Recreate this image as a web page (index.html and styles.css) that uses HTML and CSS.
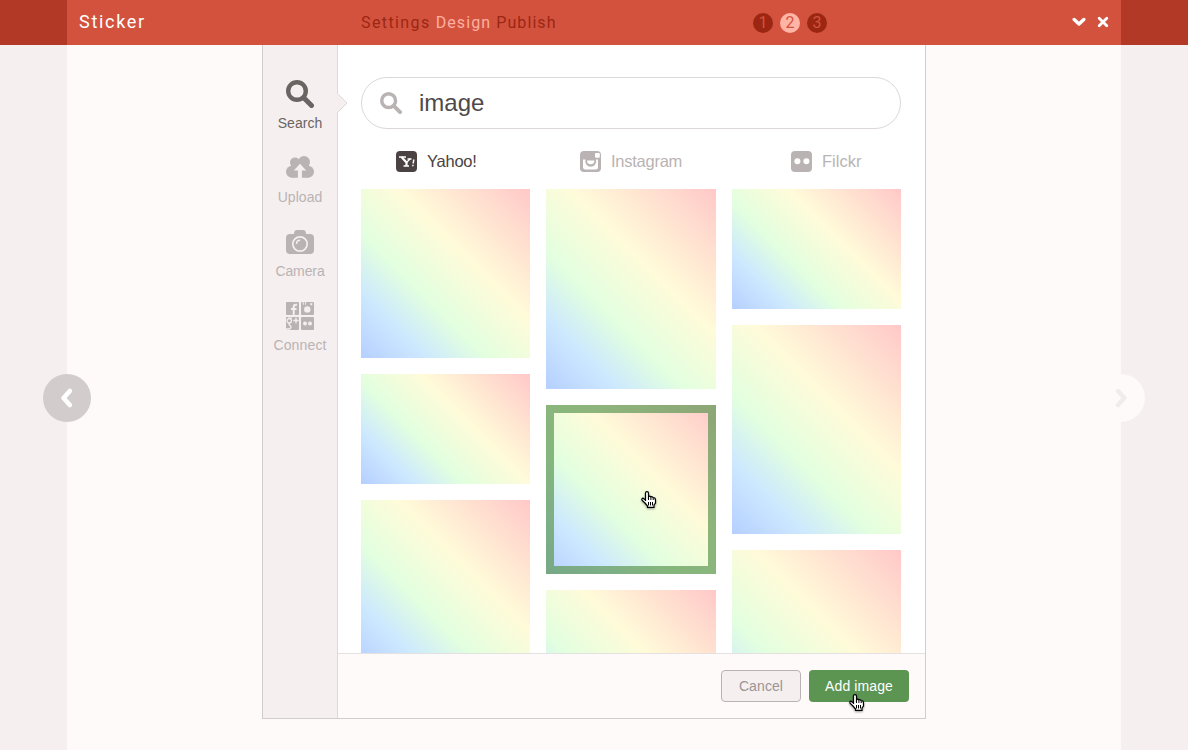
FILE: index.html
```html
<!DOCTYPE html>
<html lang="en">
<head>
<meta charset="utf-8">
<title>Sticker</title>
<link rel="stylesheet" href="styles.css">
</head>
<body>
<svg class="defs" width="0" height="0">
  <defs>
    <symbol id="lens" viewBox="0 0 28 28"><circle cx="11" cy="11" r="8.800" fill="none" stroke="currentColor" stroke-width="4.400"/><path d="M18.500 18.500l7 7" stroke="currentColor" stroke-width="5" stroke-linecap="round"/></symbol>
    <symbol id="hand" viewBox="0 0 16 18"><path d="M4.500 10V2.200Q4.500 .7 6 .7T7.500 2.200V6Q8.500 4.500 9.800 5.700 11 5.200 12 6.500 14.500 6.500 14.500 9v3l-1.500 2v2.300H6.500V15L4 12 1 9.200Q.5 7.500 2 7.200L4.500 9z" fill="#fff" stroke="#000" stroke-width="1.200"/><path d="M7.500 5v4M9.900 6v3M12.200 7v2M7.500 11v3.500M9.500 11v3.500M11.500 11v3.500" stroke="#000" stroke-width="1"/></symbol>
  </defs>
</svg>

<header class="topbar">
  <div class="topbar-inner">
    <h1 class="brand">Sticker</h1>
    <nav class="crumbs"><span class="first">Settings</span><span class="on">Design</span><span>Publish</span></nav>
    <ol class="steps"><li>1</li><li class="on">2</li><li>3</li></ol>
    <div class="window-actions">
      <svg width="14" height="10" viewBox="0 0 14 10"><path d="M2.200 2.500l4.800 4.500 4.800-4.500" fill="none" stroke="#fff" stroke-width="3.400" stroke-linecap="round" stroke-linejoin="round"/></svg>
      <svg width="12" height="12" viewBox="0 0 12 12"><path d="M2.200 2.200l7.600 7.600M9.800 2.200L2.200 9.800" stroke="#fff" stroke-width="2.800" stroke-linecap="round"/></svg>
    </div>
  </div>
</header>

<main class="stage">
  <div class="page">
    <section class="modal">
      <aside class="sources">
        <a class="source active"><svg width="28" height="28"><use href="#lens"/></svg><span class="s1">Search</span></a>
        <a class="source"><svg width="28" height="28" viewBox="0 0 28 28"><g fill="currentColor"><circle cx="9" cy="8.500" r="5"/><circle cx="18" cy="8" r="6"/><circle cx="6" cy="17.700" r="6"/><circle cx="22" cy="17.700" r="6"/><path d="M5 9h18v9l-1 5.700H6z"/></g><path d="M14 9.800l6.200 6.700h-4.300V24h-4v-7.500H7.800z" fill="#f5efef"/></svg><span class="s2">Upload</span></a>
        <a class="source"><svg width="28" height="28" viewBox="0 0 28 28"><path fill="currentColor" d="M4 6h4q0-4 3-4h6q3 0 3 4h4q4 0 4 4v12q0 4-4 4H4q-4 0-4-4V10q0-4 4-4z"/><circle cx="14" cy="16" r="7.200" fill="none" stroke="#f5efef" stroke-width="1.700"/><path d="M10.500 16q0-3.700 3.700-3.700" fill="none" stroke="#f5efef" stroke-width="1.400"/></svg><span class="s3">Camera</span></a>
        <a class="source"><svg width="28" height="28" viewBox="0 0 28 28"><g fill="currentColor"><rect width="13" height="13" rx="1"/><rect x="15" width="13" height="13" rx="1"/><rect y="15" width="13" height="13" rx="1"/><rect x="15" y="15" width="13" height="13" rx="1"/></g><g fill="none" stroke="#f5efef"><path d="M11 2.800H10Q7.700 2.800 7.700 5v8M5 7h5.500" stroke-width="2"/><path d="M17.300 0v2.800M19.500 0v2.800" stroke-width=".9"/><circle cx="3.200" cy="18.800" r="2.200" stroke-width="1.300"/><path d="M3.500 21.200q-1.500 1 .7 2.300 1.800 2-.5 3.500H0M2 16.200h4" stroke-width="1.300"/><path d="M10 15.800v5.400M7.300 18.500h5.400" stroke-width="1.400"/></g><g fill="#f5efef"><circle cx="21.300" cy="7.400" r="3.200"/><rect x="24.300" y="1.200" width="2" height="2"/><circle cx="19" cy="21.500" r="2"/><circle cx="24" cy="21.500" r="2"/></g></svg><span class="s4">Connect</span></a>
        <svg class="pointer" width="11" height="20" viewBox="0 0 11 20"><path d="M0 0L10 10 0 20z" fill="#f5efef"/><path d="M.5 .5L10 10 .5 19.500" fill="none" stroke="#ddd7d7"/></svg>
      </aside>
      <div class="content">
        <div class="results">
          <div class="searchbox"><svg width="22" height="22"><use href="#lens"/></svg><span>image</span></div>
          <nav class="tabs">
            <a class="tab yahoo"><svg width="21" height="21" viewBox="0 0 21 21"><rect width="21" height="21" rx="4" fill="currentColor"/><path d="M3 6h7M11.500 8h4M7.500 15h5.500" fill="none" stroke="#fff" stroke-width="1.300"/><path d="M5.500 6l5 5.500V15" fill="none" stroke="#fff" stroke-width="2.200"/><path d="M10.500 11.500L14 8" stroke="#fff" stroke-width="1.300"/><path d="M17.800 8.500l-.6 4M16.900 13.800v1.500" stroke="#fff" stroke-width="1.500"/></svg><span>Yahoo!</span></a>
            <a class="tab insta"><svg width="21" height="21" viewBox="0 0 21 21"><rect width="21" height="21" rx="4" fill="currentColor"/><path d="M3 8.500h2.500a5.500 5.500 0 1 0 10.500 0h2V16q0 2.500-2.500 2.500h-10Q3 18.500 3 16z" fill="#fff"/><path d="M7 9.500a3.700 3.700 0 0 0 7.400 0z" fill="#fff"/><rect x="15" y="2" width="4.800" height="4.800" rx="1" fill="#fff"/></svg><span>Instagram</span></a>
            <a class="tab flickr"><svg width="21" height="21" viewBox="0 0 21 21"><rect width="21" height="21" rx="4" fill="currentColor"/><circle cx="6.400" cy="10.300" r="3" fill="#fff"/><circle cx="15.400" cy="10.300" r="3" fill="#fff"/></svg><span>Filckr</span></a>
          </nav>
          <div class="gallery">
            <div class="column"><div class="tile square"></div><div class="tile wide"></div><div class="tile square"></div></div>
            <div class="column"><div class="tile portrait"></div><div class="tile square selected"><svg class="cursor" width="16" height="18"><use href="#hand"/></svg></div><div class="tile square"></div></div>
            <div class="column"><div class="tile landscape"></div><div class="tile tall"></div><div class="tile tall"></div></div>
          </div>
        </div>
        <footer class="actions">
          <button class="btn cancel"><span>Cancel</span></button>
          <button class="btn add"><span>Add image</span><svg class="cursor" width="16" height="18"><use href="#hand"/></svg></button>
        </footer>
      </div>
    </section>
    <a class="pager prev"><svg width="12" height="20" viewBox="0 0 12 20"><path d="M8.800 3L2.600 10l6.200 7" fill="none" stroke="#fff" stroke-width="4.600" stroke-linecap="round" stroke-linejoin="round"/></svg></a>
    <a class="pager next"><svg width="12" height="20" viewBox="0 0 12 20"><path d="M3 3l6.300 7L3 17" fill="none" stroke="#f0ecec" stroke-width="4.400" stroke-linecap="round" stroke-linejoin="round"/></svg></a>
  </div>
</main>
</body>
</html>
```

FILE: styles.css
```css
* { box-sizing: border-box; }
body {
  margin: 0;
  width: 1188px;
  height: 750px;
  overflow: hidden;
  background: #f5efef;
  font-family: "Liberation Sans", Arial, sans-serif;
}
svg { display: block; flex: none; }
.defs { position: absolute; }

.topbar { height: 45px; padding: 0 67px; background: #b13925; }
.topbar-inner {
  height: 45px;
  padding: 0 12px;
  display: flex;
  align-items: center;
  background: #d3523e;
  font-family: Roboto, sans-serif;
}
.brand { margin: 0; width: 282px; font-size: 18px; font-weight: 400; letter-spacing: 1.7px; color: #fff; line-height: 44px; height: 45px; }
.crumbs { display: flex; gap: 5px; width: 392px; font-size: 16px; letter-spacing: 1.1px; color: #9b2713; line-height: 45px; }
.crumbs .first { letter-spacing: 1.4px; }
.crumbs .on { color: #ffb0a0; }
.steps { display: flex; gap: 7px; margin: 0; padding: 0; list-style: none; }
.steps li {
  width: 20px;
  height: 20px;
  border-radius: 50%;
  background: #9b2713;
  color: #d3523e;
  font-size: 16px;
  line-height: 20px;
  text-align: center;
}
.steps .on { background: #ffb5a6; }
.window-actions { display: flex; align-items: center; gap: 11px; height: 44px; margin: 0 0 1px auto; }

.stage { height: 705px; padding: 0 67px; }
.page { position: relative; height: 705px; padding-left: 195px; background: #fefaf9; }
.modal {
  display: flex;
  width: 664px;
  height: 674px;
  border: 1px solid #d2cdcd;
  border-top: 0;
  background: #fff;
}
.sources {
  position: relative;
  width: 75px;
  padding-top: 35px;
  background: #f5efef;
  border-right: 1px solid #ddd7d7;
}
.source { display: flex; flex-direction: column; align-items: center; height: 74px; color: #bab3b3; font-size: 14px; }
.source span { margin-top: 7px; line-height: 16px; white-space: nowrap; }
.source.active { color: #6a6463; }
.s1, .s2 { letter-spacing: .05px; }
.s3 { letter-spacing: -.1px; }
.s4 { letter-spacing: .15px; }
.pointer { position: absolute; left: 74px; top: 48px; }

.content { flex: 1; min-width: 0; }
.results { height: 608px; padding: 32px 24px 0 23px; overflow: hidden; }
.searchbox {
  display: flex;
  align-items: center;
  height: 52px;
  padding-left: 18px;
  gap: 17px;
  border: 1px solid #ddd8d8;
  border-radius: 26px;
  color: #bab3b3;
}
.searchbox span { font-size: 24px; color: #4f494a; }
.tabs { display: flex; align-items: center; height: 60px; padding: 5px 0 0 35px; font-size: 16.5px; color: #bab3b3; }
.tab { display: flex; align-items: center; gap: 10px; height: 21px; }
.yahoo { width: 184px; color: #4a4243; }
.insta { width: 211px; }
.tab span { letter-spacing: -.25px; }
.flickr span { letter-spacing: 0; }

.gallery { display: grid; grid-template-columns: repeat(3, 1fr); gap: 16px; }
.column { display: flex; flex-direction: column; gap: 16px; }
.tile {
  flex: none;
  background: linear-gradient(45deg, #b5cfff 0%, #cce8ff 19%, #e2ffdf 37%, #fffbd9 61%, #ffc8c8 100%);
}
.square { height: 169px; }
.wide { height: 110px; }
.portrait { height: 200px; }
.landscape { height: 120px; }
.tall { height: 209px; }
.selected { position: relative; box-shadow: inset 0 0 0 8px rgba(93, 151, 83, .7); }
.cursor { position: absolute; filter: drop-shadow(0 1px 1px rgba(0, 0, 0, .4)); }
.selected .cursor { left: 95px; top: 86px; }

.actions {
  display: flex;
  justify-content: flex-end;
  gap: 8px;
  height: 65px;
  padding: 16px 16px 0;
  border-top: 1px solid #e5e1e1;
  background: #fefaf9;
}
.btn {
  position: relative;
  height: 32px;
  padding: 0;
  border: 0;
  border-radius: 4px;
  font-family: inherit;
  font-size: 14px;
  letter-spacing: .1px;
}
.cancel { width: 80px; border: 1px solid #bab3b3; background: #f5efef; color: #9b9494; }
.add { width: 100px; background: #5c9452; color: #fff; }
.add .cursor { left: 40px; top: 24px; }

.pager {
  position: absolute;
  top: 329px;
  width: 48px;
  height: 48px;
  border-radius: 50%;
  display: flex;
  align-items: center;
  justify-content: center;
}
.prev { left: -24px; background: #d2cccc; }
.next { right: -24px; background: #fefaf9; }
```
